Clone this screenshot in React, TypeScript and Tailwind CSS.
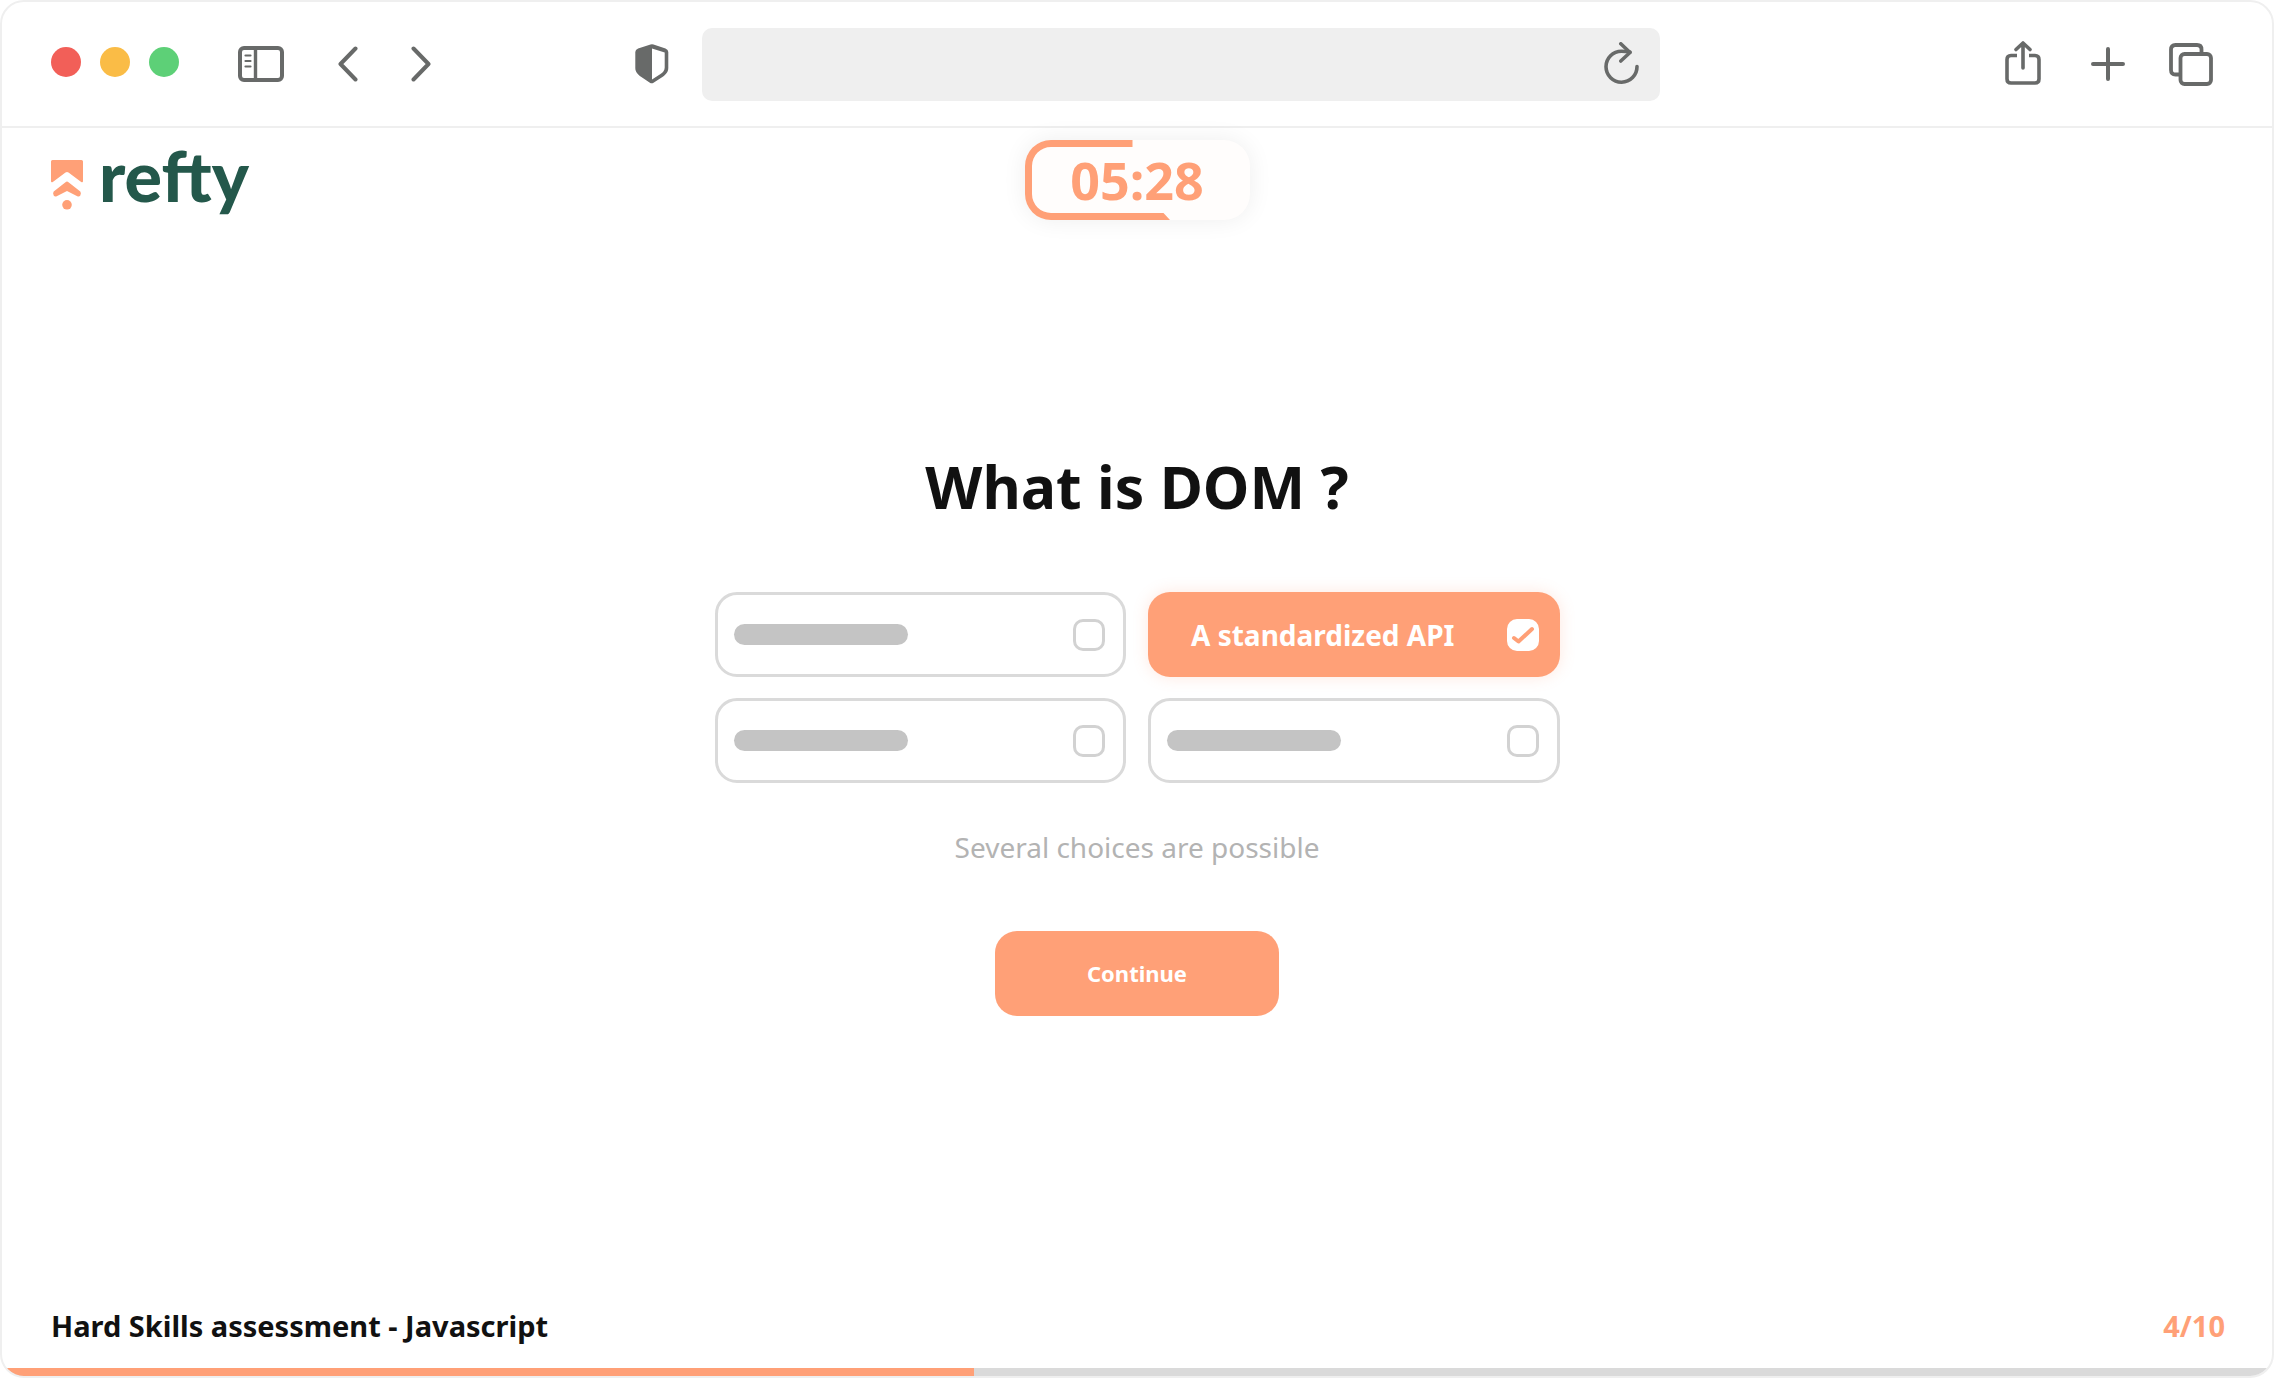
import React, { useState } from 'react';

type Answer = {
    id: string;
    label?: string;
};

const answers: Answer[] = [
    { id: 'answer-1' },
    { id: 'answer-2', label: 'A standardized API' },
    { id: 'answer-3' },
    { id: 'answer-4' },
];

const assessment = {
    name: 'Hard Skills assessment - Javascript',
    question: 'What is DOM ?',
    hint: 'Several choices are possible',
    timeLeft: '05:28',
    current: 4,
    total: 10,
    progress: 42.8,
};

const SidebarIcon: React.FC = () => (
    <svg width="46" height="36" viewBox="0 0 46 36" fill="none" stroke="currentColor">
        <rect x="2" y="2" width="42" height="32" rx="4" strokeWidth="4" />
        <path d="M17.5 2v32" strokeWidth="3.4" />
        <path d="M7.5 9.5h5M7.5 15h5M7.5 20.5h5" strokeWidth="2.2" strokeLinecap="round" />
    </svg>
);

const ChevronIcon: React.FC<{ flip?: boolean }> = ({ flip }) => (
    <svg width="20" height="36" viewBox="0 0 20 36" fill="none" stroke="currentColor" strokeWidth="4" strokeLinecap="round" strokeLinejoin="round">
        <path d={flip ? 'M2.5 2.5 17.5 18 2.5 33.5' : 'M17.5 2.5 2.5 18l15 15.5'} />
    </svg>
);

const ShieldIcon: React.FC = () => (
    <svg width="34" height="40" viewBox="0 0 34 40">
        <path
            fill="currentColor"
            fillRule="evenodd"
            d="M15.5.5q1.5-.6 3 0l12 4q2.8 1 2.8 3.5v16c0 4-2.5 6.5-5.5 8.8L18.5 38.7q-1.800 1-3.600 0L6 32.800C3 30.500.3 28 .3 24V8q0-2.500 2.800-3.500zM17 4.500v31l8.500-5.500c2.500-1.800 4.200-3.500 4.200-6.500V8.500z"
        />
    </svg>
);

const ReloadIcon: React.FC = () => (
    <svg width="36" height="44" viewBox="0 0 36 44" fill="none" stroke="currentColor" strokeWidth="3.6" strokeLinecap="round" strokeLinejoin="round">
        <path d="M33 24.5A15.5 15.5 0 1 1 17.5 9.2q4 0 8.5.8" />
        <path d="M16.8 1.8l9.2 8.7-9.2 8.5" />
    </svg>
);

const ShareIcon: React.FC = () => (
    <svg width="36" height="46" viewBox="0 0 36 46" fill="none" stroke="currentColor" strokeWidth="3.6" strokeLinecap="round" strokeLinejoin="round">
        <path strokeLinecap="butt" d="M12 14.5H6q-4 0-4 4V38q0 4 4 4h24q4 0 4-4V18.5q0-4-4-4h-6" />
        <path d="M18 2V27M11 8.500 18 2l7 6.500" />
    </svg>
);

const PlusIcon: React.FC = () => (
    <svg width="34" height="34" viewBox="0 0 34 34" fill="none" stroke="currentColor" strokeWidth="4" strokeLinecap="round">
        <path d="M17 2v30M2 17h30" />
    </svg>
);

const TabsIcon: React.FC = () => (
    <svg width="44" height="44" viewBox="0 0 44 44" fill="none" stroke="currentColor" strokeWidth="3.8">
        <path d="M11 32.5H6.5q-4.5 0-4.5-4.5V7.5Q2 3 6.500 3H28q4.500 0 4.500 4.500V11" />
        <rect x="11.5" y="12" width="30.5" height="30" rx="4" />
    </svg>
);

const LogoMark: React.FC = () => (
    <svg width="32" height="50" viewBox="0 0 32 50" fill="#ffa077" className="mt-5">
        <path d="M1.5 0h29q1.5 0 1.500 1.500v19.500q0 2-1.800 1L17.500 12.500q-1.500-1.200-3 0L1.800 22Q0 23 0 21V1.500Q0 0 1.500 0z" />
        <path d="M14.500 22.200q1.500-1.200 3 0l11.800 9.300q1.200 1.500 0 4-1 1.500-3 .8L16 31 5.700 36.300q-2 .700-3-.8-1.200-2.500 0-4z" />
        <circle cx="16" cy="44.8" r="4.8" />
    </svg>
);

const Timer: React.FC<{ value: string }> = ({ value }) => (
    <div className="relative flex h-20 w-[225px] items-center justify-center rounded-[26px] bg-[#fffdfc] shadow-[0_0_24px_rgba(0,0,0,0.07)]">
        <svg className="absolute inset-0" width="225" height="80" viewBox="0 0 225 80" fill="#ffa077">
            <path d="M107.5 0H26A26 26 0 0 0 0 26v28a26 26 0 0 0 26 26h119l-6.500-7H26A19 19 0 0 1 7 54V26A19 19 0 0 1 26 7h81.500z" />
        </svg>
        <span className="relative text-[52px] font-bold leading-none text-[#ffa077]">{value}</span>
    </div>
);

const BrowserBar: React.FC = () => (
    <header className="flex h-[126px] items-center border-b-2 border-[#efefef] pl-[49px] pr-[59px] text-[#686a69]">
        <div className="flex w-[30.1%] items-center">
            <div className="mb-1 flex gap-[19px]">
                <span className="size-[30px] rounded-full bg-[#f25f58]" />
                <span className="size-[30px] rounded-full bg-[#fabc46]" />
                <span className="size-[30px] rounded-full bg-[#5dd077]" />
            </div>
            <button type="button" aria-label="Toggle sidebar" className="ml-[59px]"><SidebarIcon /></button>
            <button type="button" aria-label="Back" className="ml-[54px]"><ChevronIcon /></button>
            <button type="button" aria-label="Forward" className="ml-[53px]"><ChevronIcon flip /></button>
            <button type="button" aria-label="Privacy report" className="ml-auto mr-[33px]"><ShieldIcon /></button>
        </div>
        <div className="flex h-[73px] w-[44.3%] items-center rounded-[10px] bg-[#efefef] pr-5">
            <input type="text" aria-label="Address" className="h-full min-w-0 flex-1 bg-transparent pl-5 text-2xl outline-none" />
            <button type="button" aria-label="Reload"><ReloadIcon /></button>
        </div>
        <div className="flex flex-1 items-center justify-end">
            <button type="button" aria-label="Share"><ShareIcon /></button>
            <button type="button" aria-label="New tab" className="ml-[50px]"><PlusIcon /></button>
            <button type="button" aria-label="Show tabs" className="ml-11"><TabsIcon /></button>
        </div>
    </header>
);

type AnswerCardProps = {
    answer: Answer;
    checked: boolean;
    onToggle: () => void;
};

const AnswerCard: React.FC<AnswerCardProps> = ({ answer, checked, onToggle }) => (
    <label
        htmlFor={answer.id}
        className={
            checked
                ? 'flex h-[85px] cursor-pointer items-center justify-between rounded-[22px] bg-[#ffa077] pl-[43px] pr-[21px] shadow-[0_0_16px_rgba(255,140,100,0.2)]'
                : 'flex h-[85px] cursor-pointer items-center justify-between rounded-[22px] border-[3px] border-[#dadada] pl-4 pr-[18px]'
        }
    >
        {answer.label ? (
            <span className={checked ? 'text-[28px] font-bold leading-10 text-white' : 'text-[28px] font-bold leading-10 text-[#111111]'}>
                {answer.label}
            </span>
        ) : (
            <span className="h-[21px] w-[174px] rounded-full bg-[#c4c4c4]" />
        )}
        <span className="relative flex size-8">
            <input
                id={answer.id}
                type="checkbox"
                aria-label={answer.label ?? answer.id}
                checked={checked}
                onChange={onToggle}
                className="size-8 appearance-none rounded-[10px] border-[3px] border-[#d2d2d2] bg-white checked:border-white"
            />
            {checked && (
                <svg className="pointer-events-none absolute inset-0" width="32" height="32" viewBox="0 0 32 32" fill="none" stroke="#ffa077" strokeWidth="4" strokeLinecap="round" strokeLinejoin="round">
                    <path d="M7 19l4.500 3.500L25 10" />
                </svg>
            )}
        </span>
    </label>
);

export default function App() {
    const [selected, setSelected] = useState<string[]>(['answer-2']);

    const toggle = (id: string) => {
        setSelected(prev => (prev.includes(id) ? prev.filter(item => item !== id) : [...prev, id]));
    };

    return (
        <div className="flex min-h-screen flex-col overflow-hidden rounded-3xl border-2 border-[#efefef] bg-white font-['Noto_Sans','Open_Sans',sans-serif] text-[#111111]">
            <BrowserBar />

            {/* Brand and timer */}
            <div className="grid grid-cols-[1fr_auto_1fr] items-start px-[49px] pt-3">
                <a href="#" aria-label="refty" className="flex items-start gap-4">
                    <LogoMark />
                    <span className="font-['Lato',sans-serif] text-[70px] font-black leading-[70px] text-[#24584b]">refty</span>
                </a>
                <Timer value={assessment.timeLeft} />
            </div>

            {/* Question */}
            <main className="flex flex-1 flex-col items-center pt-[230px]">
                <h1 className="text-[59px] font-bold leading-[72px]">{assessment.question}</h1>
                <div className="mt-[70px] grid w-[845px] grid-cols-2 gap-x-[22px] gap-y-[21px]">
                    {answers.map(answer => (
                        <AnswerCard
                            key={answer.id}
                            answer={answer}
                            checked={selected.includes(answer.id)}
                            onToggle={() => toggle(answer.id)}
                        />
                    ))}
                </div>
                <p className="mt-11 text-[28px] leading-10 text-[#b3b3b3]">{assessment.hint}</p>
                <button type="button" className="mt-16 h-[85px] w-[284px] rounded-[22px] bg-[#ffa077] text-[22px] font-bold text-white">
                    Continue
                </button>
            </main>

            {/* Progress */}
            <footer>
                <div className="flex items-center justify-between pb-[22px] pl-[49px] pr-[47px] text-[29px] font-bold leading-10">
                    <span>{assessment.name}</span>
                    <span className="text-[#ffa077]">{assessment.current}/{assessment.total}</span>
                </div>
                <div className="h-2 bg-[#dadada]">
                    <div className="h-full bg-[#ffa077]" style={{ width: `${assessment.progress}%` }} />
                </div>
            </footer>
        </div>
    );
}
